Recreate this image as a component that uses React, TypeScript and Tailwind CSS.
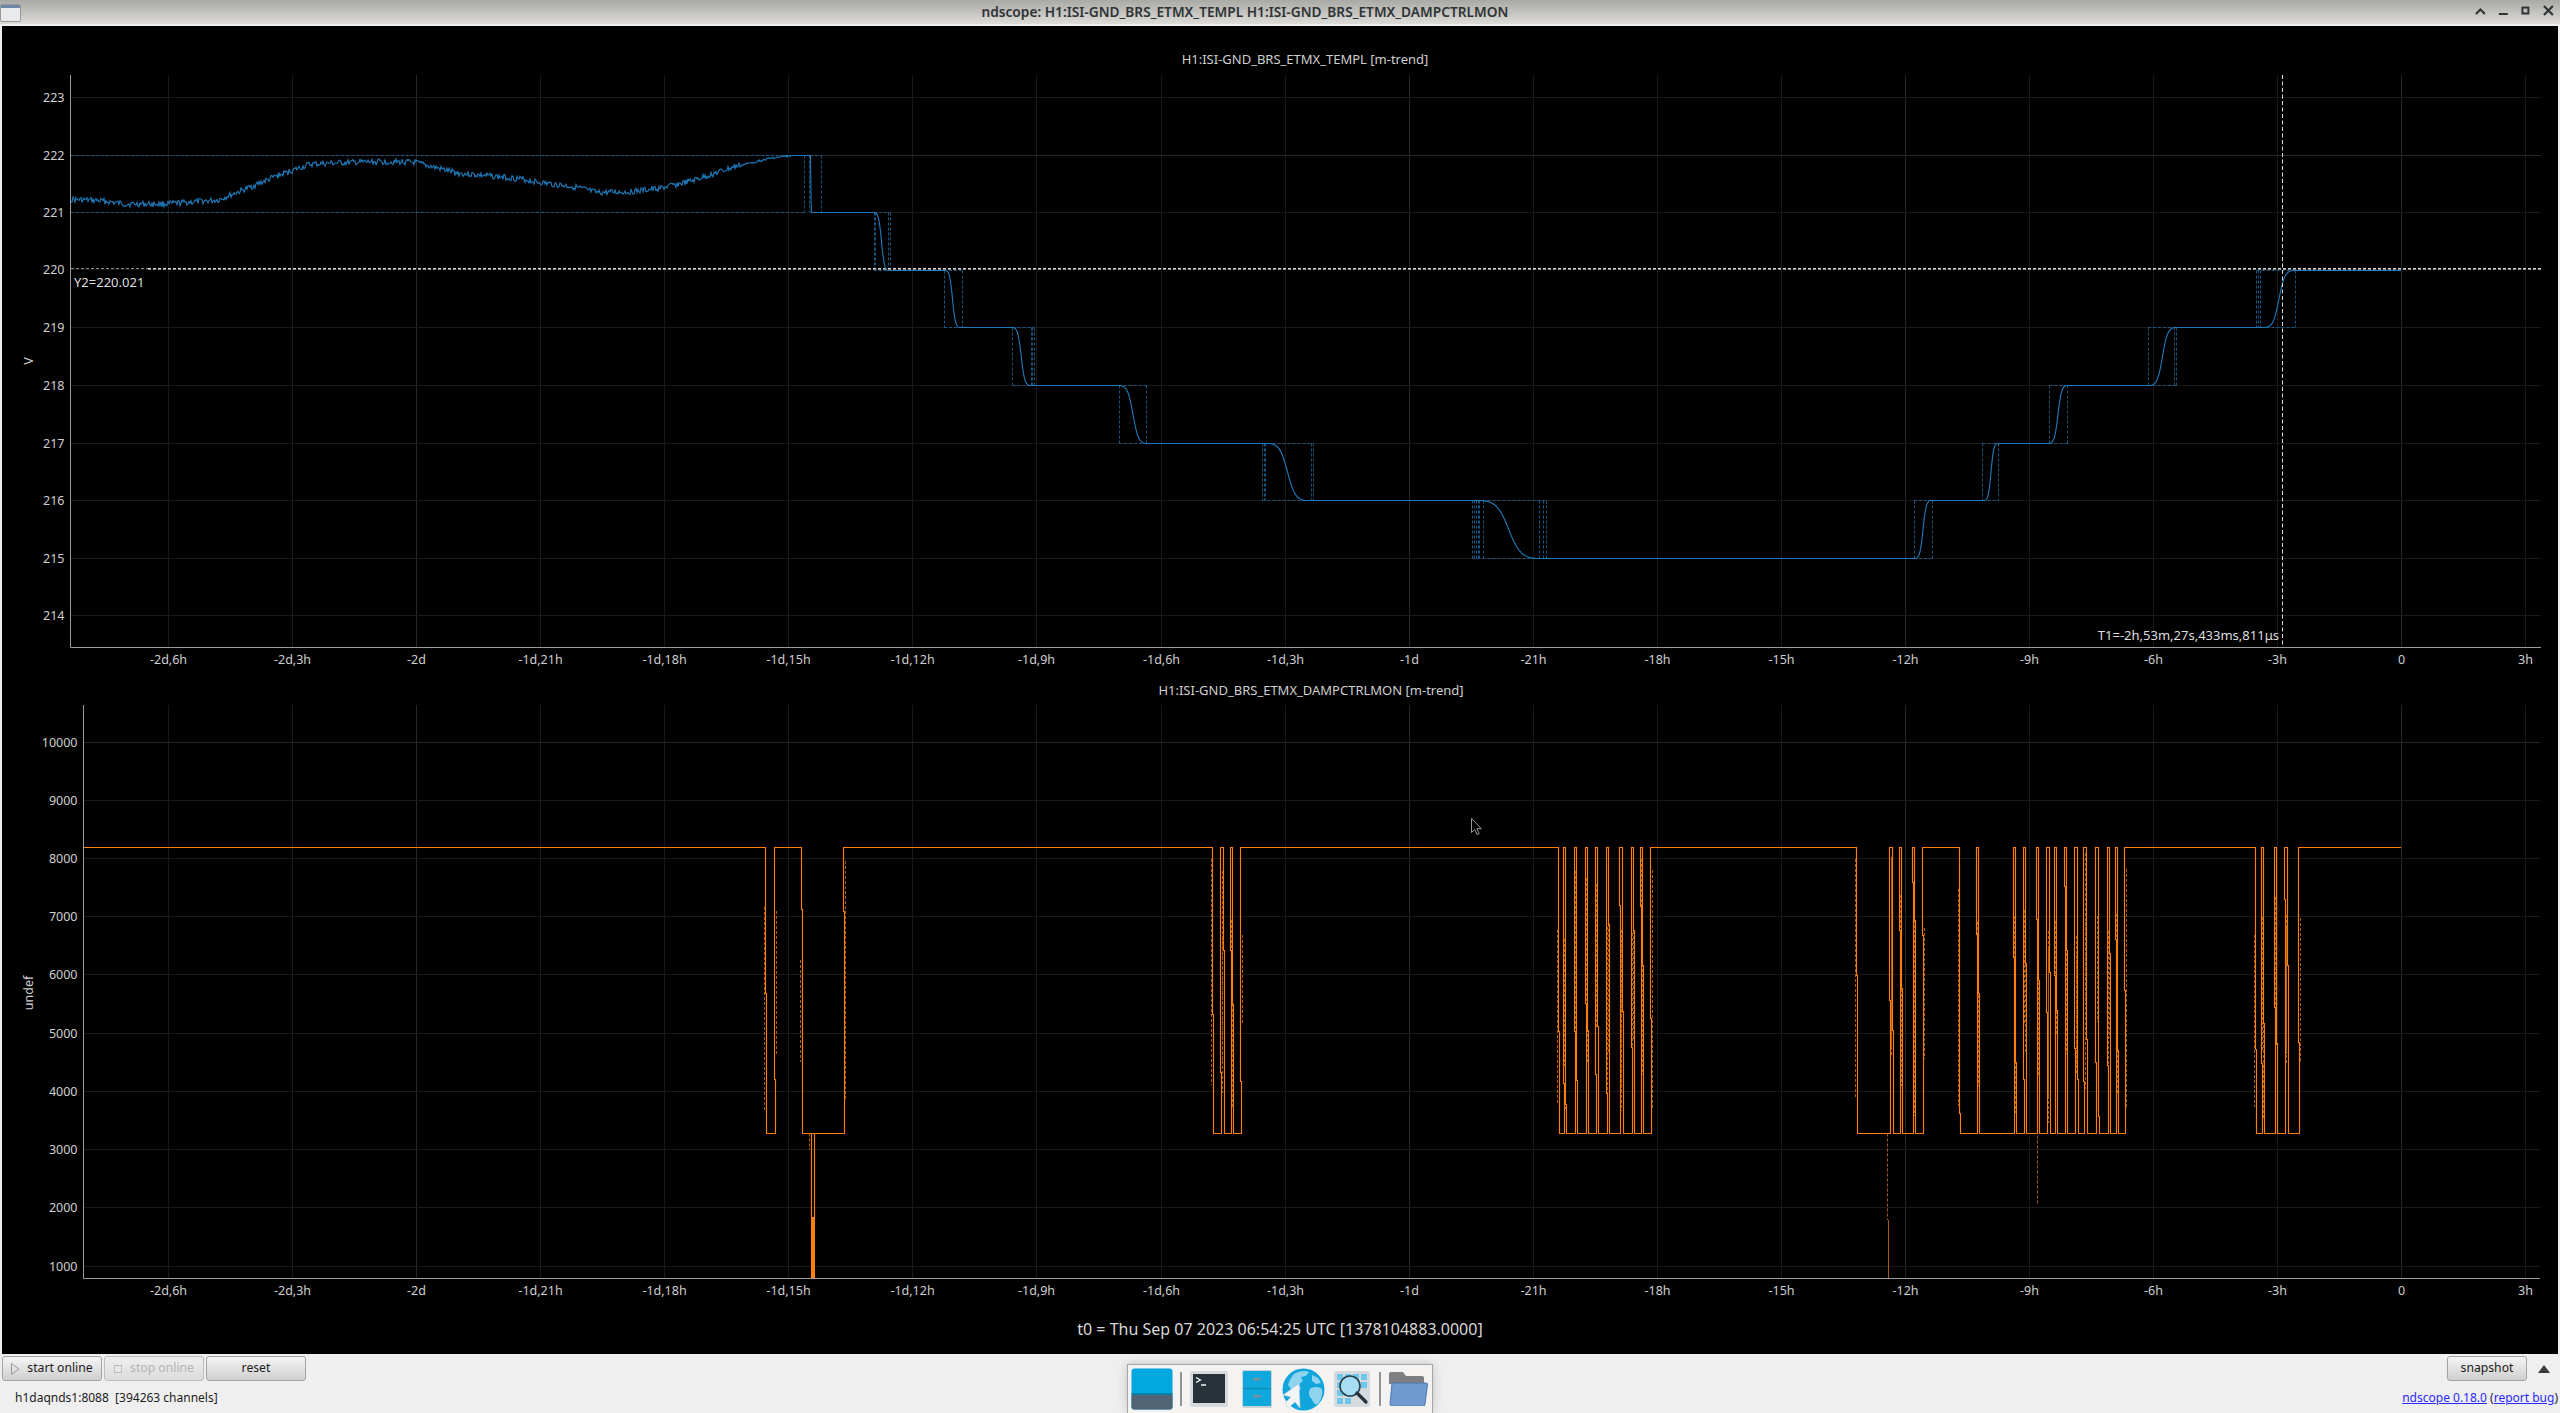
import React from "react"

// ---- axes ----
const xLabels = ["-2d,6h", "-2d,3h", "-2d", "-1d,21h", "-1d,18h", "-1d,15h", "-1d,12h", "-1d,9h", "-1d,6h", "-1d,3h", "-1d", "-21h", "-18h", "-15h", "-12h", "-9h", "-6h", "-3h", "0", "3h"]
const majorTicks = ["-2d", "-1d", "-12h", "0"]
const tickX = (i: number) => Math.round(2401.3 + 124.08 * (i - 18)) + 0.5

const level: Record<number, number> = { 222: 155.5, 221: 212.5, 220: 270.5, 219: 327.5, 218: 385.5, 217: 443.5, 216: 500.5, 215: 558.5 }
const topGrid = [[223, 97.5], [222, 155.5], [221, 212.5], [220, 269.5], [219, 327.5], [218, 385.5], [217, 443.5], [216, 500.5], [215, 558.5], [214, 615.5]]
const botGrid = [[10000, 742.5], [9000, 800.5], [8000, 858.5], [7000, 916.5], [6000, 974.5], [5000, 1033.5], [4000, 1091.5], [3000, 1149.5], [2000, 1207.5], [1000, 1266.5]]

function seeded(seed: number) {
  let s = seed
  return () => {
    s = (s * 9301 + 49297) % 233280
    return s / 233280
  }
}

// ---- blue trace ----
const trend = [[70.6, 199.5], [97.6, 200.5], [126, 204], [166.5, 204], [218, 200], [247, 188.5], [275.5, 176.5], [310, 164.3], [344.4, 162.7], [384.6, 161.7], [413.3, 162.3], [459, 173.3], [516.6, 178.3], [545.4, 183.3], [574, 186.7], [597, 192.7], [631.5, 191.7], [660, 188.3], [689, 181.7], [735, 166.7], [769.7, 158.3], [792, 155.5]]

const steps = [
  { x0: 875, x1: 888, from: 221, to: 220, dash: [874, 875.5, 888.5, 890.5] },
  { x0: 946, x1: 959, from: 220, to: 219, dash: [944, 962] },
  { x0: 1013.5, x1: 1029, from: 219, to: 218, dash: [1012.5, 1031, 1032.5, 1034.5] },
  { x0: 1121, x1: 1145, from: 218, to: 217, dash: [1119, 1146.5] },
  { x0: 1270, x1: 1305, from: 217, to: 216, dash: [1262.5, 1264, 1265.5, 1311, 1313.5] },
  { x0: 1482, x1: 1535.5, from: 216, to: 215, dash: [1472.5, 1474.5, 1476, 1478, 1479.5, 1483.5, 1539, 1543, 1546.5] },
  { x0: 1916, x1: 1930, from: 215, to: 216, dash: [1914, 1932] },
  { x0: 1985, x1: 1997, from: 216, to: 217, dash: [1982.5, 1998] },
  { x0: 2050, x1: 2066, from: 217, to: 218, dash: [2049.5, 2067.5] },
  { x0: 2151, x1: 2174, from: 218, to: 219, dash: [2148, 2174, 2176] },
  { x0: 2266, x1: 2292, from: 219, to: 220, dash: [2256.5, 2258.5, 2260.5, 2295.5] },
]

const logistic = (t: number) => {
  const f = (v: number) => 1 / (1 + Math.exp(-9 * (v - 0.5)))
  return (f(t) - f(0)) / (f(1) - f(0))
}

function bluePath() {
  const rnd = seeded(17)
  let d = ""
  let seg = 0
  for (let x = 71; x < 792; x += 1) {
    while (seg < trend.length - 2 && trend[seg + 1][0] < x) seg++
    const [ax, ay] = trend[seg]
    const [bx, by] = trend[seg + 1]
    const base = ay + ((by - ay) * (x - ax)) / (bx - ax)
    const amp = x > 740 ? 2 : 6
    const y = Math.min(base + (rnd() - 0.5) * amp, 212)
    d += `${d ? "L" : "M"}${x.toFixed(1)} ${Math.max(y, 155.5).toFixed(1)}`
  }
  d += `L810.5 155.5L811 200L811.5 212.5`
  for (const s of steps) {
    const y0 = level[s.from]
    const y1 = level[s.to]
    d += `L${s.x0} ${y0}`
    for (let i = 1; i <= 20; i++) {
      const t = i / 20
      d += `L${(s.x0 + (s.x1 - s.x0) * t).toFixed(1)} ${(y0 + (y1 - y0) * logistic(t)).toFixed(1)}`
    }
    d += `L${s.x1} ${y1}`
  }
  d += `L2401 270.5`
  return d
}

function blueDash() {
  let d = `M71 155.5H804M71 212.5H805M804.5 155.5V212.5M809.5 155.5V212.5M821.5 155.5V212.5M805 155.5H821`
  for (const s of steps) {
    const y0 = level[s.from]
    const y1 = level[s.to]
    const l = Math.min(...s.dash)
    const r = Math.max(...s.dash)
    d += `M${l} ${y0}H${r}M${l} ${y1}H${r}`
    for (const x of s.dash) d += `M${Math.floor(x) + 0.5} ${Math.min(y0, y1)}V${Math.max(y0, y1)}`
  }
  return d
}

// ---- orange trace ----
const HI = 847.5
const LO = 1133.5
const lows = [
  [765, 775], [801, 843.5], [1212, 1221], [1222.5, 1230.5], [1232, 1240.5],
  [1557.5, 1564], [1565, 1574.5], [1576, 1585.5], [1587, 1595.5], [1597, 1606.5], [1608, 1620], [1622, 1631.5], [1633, 1640.5], [1642, 1651],
  [1856, 1889.5], [1891.5, 1899.5], [1901, 1913], [1914, 1922.5], [1959, 1976.5], [1978, 2013.5], [2015, 2023.5], [2025, 2036.5], [2038, 2047],
  [2048.5, 2054.5], [2056, 2065], [2066, 2074.5], [2076.5, 2084], [2086, 2095.5], [2097.5, 2107.5], [2109, 2115.5], [2117, 2125],
  [2255, 2262], [2263, 2274.5], [2276, 2285], [2286.5, 2299],
]

function orangeTraces() {
  const rnd = seeded(5)
  let solid = `M83.5 ${HI}`
  let dash = ""
  const span = LO - HI
  lows.forEach(([a, b]) => {
    const ax = Math.round(a) + 0.5
    const bx = Math.round(b) + 0.5
    const brkA = Math.round(HI + span * (0.2 + rnd() * 0.75)) + 0.5
    const brkB = Math.round(HI + span * (0.1 + rnd() * 0.8)) + 0.5
    solid += `H${ax}V${brkA}H${ax + 1}V${LO}H${bx}V${brkB}H${bx - 1}V${HI}`
    const d1 = HI + span * rnd() * 0.4
    const d2 = HI + span * (0.55 + rnd() * 0.45)
    const d3 = HI + span * rnd() * 0.4
    const d4 = HI + span * (0.55 + rnd() * 0.45)
    dash += `M${ax - 1} ${d1.toFixed(0)}V${d2.toFixed(0)}M${bx + 1} ${d3.toFixed(0)}V${d4.toFixed(0)}`
  })
  solid += `H2401`
  // deep excursions below the lower level
  dash += `M809.5 ${LO}V1150M1887.5 ${LO}V1220M2037.5 ${LO + 2}V1204`
  return { solid, dash }
}

const orange = orangeTraces()

function PlotSvg({ top, height, left, right, bottom, grid, unit, unitY, children }: { top: number; height: number; left: number; right: number; bottom: number; grid: number[][]; unit: string; unitY: number; children: React.ReactNode }) {
  return (
    <svg width={2556} height={height} viewBox={`2 ${top} 2556 ${height}`} className="block shrink-0">
      {xLabels.map((l, i) => (
        <line key={l} x1={tickX(i)} x2={tickX(i)} y1={top} y2={bottom} stroke={majorTicks.includes(l) ? "#272727" : "#191919"} />
      ))}
      {grid.map(([v, y]) => (
        <line key={v} x1={left} x2={right} y1={y} y2={y} stroke={v === 10000 || v === 222 ? "#272727" : "#191919"} />
      ))}
      {children}
      <path d={`M${left + 0.5} ${top}V${bottom + 0.5}H${right}`} fill="none" stroke="#9c9c9c" />
      {grid.map(([v, y]) => (
        <text key={v} x={left - 5.5} y={y + 4.5} textAnchor="end" className="fill-[#cfcfcf] text-[12.5px]">
          {v}
        </text>
      ))}
      {xLabels.map((l, i) => (
        <text key={l} x={tickX(i)} y={bottom + 17} textAnchor="middle" className="fill-[#cfcfcf] text-[12.5px]">
          {l}
        </text>
      ))}
      <text x={0} y={0} transform={`translate(33 ${unitY}) rotate(-90)`} textAnchor="middle" className="fill-[#cfcfcf] text-[12.5px]">
        {unit}
      </text>
    </svg>
  )
}

function PushButton({ label, icon, disabled, className }: { label: string; icon?: React.ReactNode; disabled?: boolean; className: string }) {
  return (
    <button
      className={`flex h-[25px] items-center justify-center rounded-[3px] border text-[12.2px] ${className} ${
        disabled ? "border-[#bdbdbd] bg-gradient-to-b from-[#efefef] to-[#dcdcdc] text-[#b4b4b4]" : "border-[#a3a3a3] bg-gradient-to-b from-[#f5f5f5] to-[#cfcfcf] text-[#1c1c1c]"
      }`}
    >
      {icon}
      {label}
    </button>
  )
}

function Dock() {
  return (
    <div className="absolute bottom-0 left-[1127px] flex h-[49px] w-[306px] items-start border border-b-0 border-[#a9a6a0] bg-[#f4f3f1] pt-[3px] shadow-[0_0_10px_rgba(0,0,0,0.18)]">
      <svg width="42" height="42" viewBox="0 0 42 42" className="ml-[3px] shrink-0">
        <rect x="0.5" y="0.5" width="41" height="41" rx="3" fill="#00a8e0" />
        <rect x="0.5" y="26" width="41" height="15.5" rx="2" fill="#4f6573" />
        <rect x="0.5" y="25" width="41" height="2" fill="#0a7fa8" />
      </svg>
      <div className="ml-[7px] mt-[4px] h-[34px] w-[2px] shrink-0 bg-[#8f9497]" />
      <svg width="38" height="36" viewBox="0 0 38 36" className="ml-[8px] mt-[3px] shrink-0">
        <rect width="38" height="36" rx="2" fill="#d5dade" />
        <rect x="3" y="3" width="32" height="29" fill="#263238" />
        <path d="M6 6.5l4.5 2.5L6 11.5" fill="none" stroke="#fff" strokeWidth="1.2" />
        <path d="M11 14h5" stroke="#fff" strokeWidth="1.4" />
      </svg>
      <svg width="30" height="38" viewBox="0 0 30 38" className="ml-[14px] mt-[2px] shrink-0">
        <rect width="30" height="38" rx="2" fill="#c9d2d8" />
        <rect x="1" y="1" width="28" height="35" rx="1" fill="#0ea8dd" />
        <rect x="1" y="18" width="28" height="1.2" fill="#0b86b3" />
        <rect x="11" y="8" width="8" height="2.5" rx="1" fill="#7a929e" />
        <rect x="11" y="25" width="8" height="2.5" rx="1" fill="#7a929e" />
      </svg>
      <svg width="43" height="43" viewBox="0 0 43 43" className="ml-[10px] shrink-0">
        <circle cx="21.5" cy="21.5" r="21" fill="#10a6dc" />
        <path d="M12 6c5-3 11-4 15-2l-3 4-5 1 2 4-4 3 2 5-6 4c-4-3-5-6-7-8 1-4 3-8 6-11z" fill="#8fd3ee" />
        <path d="M28 21c4-3 9-2 12 0 1 6-1 11-4 15-3 1-5-1-6-5-3-2-4-6-2-10z" fill="#8fd3ee" />
        <path d="M30 7l6 3 3 5-5 1-4-3z" fill="#8fd3ee" />
        <path d="M17 16l1 24-5-6-7 6-3-5 6-6-8-2z" fill="#f2f4f5" stroke="#c9d2d8" strokeWidth="0.6" />
      </svg>
      <svg width="36" height="36" viewBox="0 0 36 36" className="ml-[9px] mt-[3px] shrink-0">
        <rect width="36" height="36" rx="2" fill="#d5dade" />
        <g fill="#6fc8ec">
          <rect x="3" y="3" width="6" height="6" />
          <rect x="11" y="3" width="6" height="6" />
          <rect x="19" y="3" width="6" height="6" />
          <rect x="27" y="3" width="6" height="6" />
          <rect x="3" y="11" width="6" height="6" />
          <rect x="27" y="11" width="6" height="6" />
          <rect x="3" y="19" width="6" height="6" />
          <rect x="3" y="27" width="6" height="6" />
          <rect x="11" y="27" width="6" height="6" />
        </g>
        <circle cx="16" cy="15" r="10" fill="#a8def4" stroke="#26404e" strokeWidth="1.6" />
        <path d="M23 22l9 9" stroke="#26323a" strokeWidth="3.2" strokeLinecap="round" />
      </svg>
      <div className="ml-[9px] mt-[4px] h-[34px] w-[2px] shrink-0 bg-[#8f9497]" />
      <svg width="40" height="34" viewBox="0 0 40 34" className="ml-[7px] mt-[4px] shrink-0">
        <path d="M1 2a2 2 0 012-2h12l3 4h16a2 2 0 012 2v6H1z" fill="#7d7f80" />
        <path d="M4 11h34a1.500 1.500 0 011.500 1.800L37 32a2 2 0 01-2 2H4a2 2 0 01-2-2z" fill="#6f9bd1" stroke="#4e79ae" />
      </svg>
    </div>
  )
}

export default function App() {
  return (
    <div className="relative flex h-screen w-screen flex-col overflow-hidden bg-[#efefef] font-['Noto_Sans',sans-serif]">
      {/* Window title bar */}
      <header className="flex h-[24px] shrink-0 items-center bg-gradient-to-b from-[#a9a9a5] to-[#dedcd8]">
        <svg width="21" height="19" viewBox="0 0 21 19" className="shrink-0">
          <rect x="0.500" y="1.500" width="20" height="17" rx="1.500" fill="#e8eaec" stroke="#9a9a98" />
          <rect x="1" y="2" width="19" height="3" fill="#6d86a8" />
        </svg>
        <div className="flex-1 text-center text-[13.7px] font-semibold text-[#2e3436]">ndscope: H1:ISI-GND_BRS_ETMX_TEMPL H1:ISI-GND_BRS_ETMX_DAMPCTRLMON</div>
        <div className="flex shrink-0">
          <svg viewBox="0 0 23 24" className="h-[24px] w-[22.8px]">
            <path d="M7 14l4.500-4.500L16 14" fill="none" stroke="#2e3436" strokeWidth="2" />
          </svg>
          <svg viewBox="0 0 23 24" className="h-[24px] w-[22.8px]">
            <path d="M7 14h9" fill="none" stroke="#2e3436" strokeWidth="2" />
          </svg>
          <svg viewBox="0 0 23 24" className="h-[24px] w-[22.8px]">
            <rect x="8.500" y="7.500" width="6" height="6" fill="none" stroke="#2e3436" strokeWidth="2" />
          </svg>
          <svg viewBox="0 0 23 24" className="h-[24px] w-[22.8px]">
            <path d="M7 6l9 9M16 6l-9 9" fill="none" stroke="#2e3436" strokeWidth="2.200" />
          </svg>
        </div>
      </header>

      {/* Scope plots */}
      <main className="mx-[2px] mt-[2px] flex h-[1328px] shrink-0 flex-col bg-black">
        <div className="mt-[19px] flex h-[30px] shrink-0 items-center justify-center pl-[65px] pr-[15px] text-[13px] text-[#cfcfcf]">H1:ISI-GND_BRS_ETMX_TEMPL [m-trend]</div>
        <PlotSvg top={75} height={601} left={70} right={2541} bottom={647} grid={topGrid} unit="V" unitY={361}>
          <path d={blueDash()} fill="none" stroke="#1a5682" strokeDasharray="3 2" />
          <path d="M71 268.5H148" fill="none" stroke="#8a8a8a" strokeDasharray="3 2" />
          <path d="M148 269.500H2541" fill="none" stroke="#8f8f8f" strokeDasharray="3 2" />
          <path d="M148 268.500H2541" fill="none" stroke="#d4d4d4" strokeDasharray="3 2" />
          <path d={bluePath()} fill="none" stroke="#1f7bbb" strokeWidth="1.1" />
          <path d="M2282.500 75V647" fill="none" stroke="#dcdcdc" strokeDasharray="4 2.500" />
          <text x={74} y={287} className="fill-[#dedede] text-[13px]">
            Y2=220.021
          </text>
          <text x={2279} y={640} textAnchor="end" className="fill-[#dedede] text-[13px]">
            T1=-2h,53m,27s,433ms,811μs
          </text>
        </PlotSvg>

        <div className="flex h-[29px] shrink-0 items-center justify-center pl-[77px] pr-[15px] text-[13px] text-[#cfcfcf]">H1:ISI-GND_BRS_ETMX_DAMPCTRLMON [m-trend]</div>
        <PlotSvg top={705} height={595} left={83} right={2540} bottom={1278} grid={botGrid} unit="undef" unitY={993}>
          <path d={orange.dash} fill="none" stroke="#a85a12" strokeDasharray="3 2" />
          <path d="M1888.500 1220V1278" fill="none" stroke="#a85a12" />
          <path d={orange.solid} fill="none" stroke="#ff7f0e" strokeWidth="1.15" />
          <path d="M811.500 1133V1217M814.500 1133V1217" fill="none" stroke="#ff7f0e" strokeWidth="1.15" />
          <path d="M813 1217V1278" fill="none" stroke="#ff7f0e" strokeWidth="4" />
          <path d="M1471.500 818.500v14l3.200-3 2.300 5.200 2.200-1-2.300-5h4.400z" fill="#000" stroke="#9a9a9a" />
        </PlotSvg>

        <div className="flex flex-1 items-center justify-center pt-[3px] text-[16px] text-[#d8d8d8]">t0 = Thu Sep 07 2023 06:54:25 UTC [1378104883.0000]</div>
      </main>

      {/* Control bar */}
      <footer className="flex flex-1 flex-col pt-[2px] text-[12px] text-[#1c1c1c]">
        <div className="flex h-[25px] items-center gap-[2px] pl-[2px]">
          <PushButton
            label="start online"
            className="w-[100px]"
            icon={
              <svg width="9" height="12" viewBox="0 0 9 12" className="mr-[7px] shrink-0">
                <path d="M0.500 0.500L8 6 0.500 11.500z" fill="none" stroke="#9a9a9a" />
              </svg>
            }
          />
          <PushButton
            label="stop online"
            disabled
            className="w-[100px]"
            icon={
              <svg width="8" height="8" viewBox="0 0 8 8" className="mr-[8px] shrink-0">
                <rect x="0.500" y="0.500" width="7" height="7" fill="#e8e8e8" stroke="#bcbcbc" />
              </svg>
            }
          />
          <PushButton label="reset" className="w-[100px]" />
          <div className="flex-1" />
          <PushButton label="snapshot" className="mr-[9px] w-[80px]" />
          <svg width="12" height="8" viewBox="0 0 12 8" className="mr-[10px] shrink-0">
            <path d="M6 0l6 8H0z" fill="#3a3a3a" />
          </svg>
        </div>
        <div className="flex h-[34px] items-center justify-between pl-[15px] pr-[2px]">
          <span className="whitespace-pre">h1daqnds1:8088  [394263 channels]</span>
          <span>
            <a className="text-[#2a2aff] underline">ndscope 0.18.0</a> (<a className="text-[#2a2aff] underline">report bug</a>)
          </span>
        </div>
      </footer>

      <Dock />
    </div>
  )
}
